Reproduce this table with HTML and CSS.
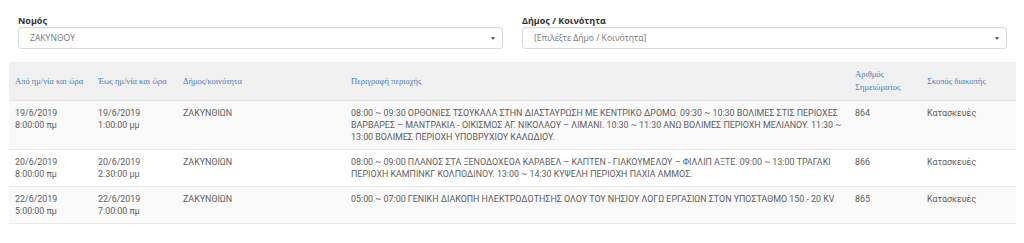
FILE: index.html
```html
<!DOCTYPE html>
<html lang="el">
<head>
<meta charset="utf-8">
<title>Διακοπές ρεύματος</title>
<link rel="stylesheet" href="styles.css">
</head>
<body>
<div class="page">
  <div class="filters">
    <div class="field">
      <label class="field-label">Νομός</label>
      <div class="select"><span class="select-value">ΖΑΚΥΝΘΟΥ</span><span class="select-arrow"></span></div>
    </div>
    <div class="field">
      <label class="field-label">Δήμος / Κοινότητα</label>
      <div class="select"><span class="select-value">[Επιλέξτε Δήμο / Κοινότητα]</span><span class="select-arrow"></span></div>
    </div>
  </div>
  <table class="outages">
    <colgroup>
      <col class="c-from"><col class="c-to"><col class="c-muni"><col class="c-desc"><col class="c-num"><col class="c-purpose">
    </colgroup>
    <thead>
      <tr>
        <th>Από ημ/νία και ώρα</th>
        <th>Έως ημ/νία και ώρα</th>
        <th>Δήμος/κοινότητα</th>
        <th>Περιγραφή περιοχής</th>
        <th>Αριθμός Σημειώματος</th>
        <th>Σκοπός διακοπής</th>
      </tr>
    </thead>
    <tbody>
      <tr>
        <td>19/6/2019<br>8:00:00 πμ</td>
        <td>19/6/2019<br>1:00:00 μμ</td>
        <td>ΖΑΚΥΝΘΙΩΝ</td>
        <td>08:00 ~ 09:30 ΟΡΘΟΝΙΕΣ ΤΣΟΥΚΑΛΑ ΣΤΗΝ ΔΙΑΣΤΑΥΡΩΣΗ ΜΕ ΚΕΝΤΡΙΚΟ ΔΡΟΜΟ. 09:30 ~ 10:30 ΒΟΛΙΜΕΣ ΣΤΙΣ ΠΕΡΙΟΧΕΣ ΒΑΡΒΑΡΕΣ – ΜΑΝΤΡΑΚΙΑ - ΟΙΚΙΣΜΟΣ ΑΓ. ΝΙΚΟΛΑΟΥ – ΛΙΜΑΝΙ. 10:30 ~ 11:30 ΑΝΩ ΒΟΛΙΜΕΣ ΠΕΡΙΟΧΗ ΜΕΛΙΑΝΟΥ. 11:30 ~ 13:00 ΒΟΛΙΜΕΣ ΠΕΡΙΟΧΗ ΥΠΟΒΡΥΧΙΟΥ ΚΑΛΩΔΙΟΥ.</td>
        <td>864</td>
        <td>Κατασκευές</td>
      </tr>
      <tr>
        <td>20/6/2019<br>8:00:00 πμ</td>
        <td>20/6/2019<br>2:30:00 μμ</td>
        <td>ΖΑΚΥΝΘΙΩΝ</td>
        <td>08:00 ~ 09:00 ΠΛΑΝΟΣ ΣΤΑ ΞΕΝΟΔΟΧΕΟΑ ΚΑΡΑΒΕΛ – ΚΑΠΤΕΝ - ΓΙΑΚΟΥΜΕΛΟΥ – ΦΙΛΛΙΠ ΑΞΤΕ. 09:00 ~ 13:00 ΤΡΑΓΑΚΙ ΠΕΡΙΟΧΗ ΚΑΜΠΙΝΚΓ ΚΟΛΠΟΔΙΝΟΥ. 13:00 ~ 14:30 ΚΥΨΕΛΗ ΠΕΡΙΟΧΗ ΠΑΧΙΑ ΑΜΜΟΣ.</td>
        <td>866</td>
        <td>Κατασκευές</td>
      </tr>
      <tr>
        <td>22/6/2019<br>5:00:00 πμ</td>
        <td>22/6/2019<br>7:00:00 πμ</td>
        <td>ΖΑΚΥΝΘΙΩΝ</td>
        <td>05:00 ~ 07:00 ΓΕΝΙΚΗ ΔΙΑΚΟΠΗ ΗΛΕΚΤΡΟΔΟΤΗΣΗΣ ΟΛΟΥ ΤΟΥ ΝΗΣΙΟΥ ΛΟΓΩ ΕΡΓΑΣΙΩΝ ΣΤΟΝ ΥΠΟΣΤΑΘΜΟ 150 - 20 KV</td>
        <td>865</td>
        <td>Κατασκευές</td>
      </tr>
    </tbody>
  </table>
</div>
</body>
</html>
```
FILE: styles.css
```css
html, body {
  margin: 0;
  padding: 0;
  background: #fff;
}
.page {
  padding: 14px 8px 0 9px;
  font-family: "Roboto", "Noto Sans", sans-serif;
  color: #555;
}
.filters {
  display: grid;
  grid-template-columns: 1fr 1fr;
  column-gap: 19px;
  padding: 0 9px;
}
.field {
  display: flex;
  flex-direction: column;
}
.field-label {
  font-family: "Open Sans", "Noto Sans", sans-serif;
  font-weight: 700;
  font-size: 9px;
  line-height: 13px;
  color: #333;
}
.select {
  display: flex;
  align-items: center;
  justify-content: space-between;
  height: 22px;
  box-sizing: border-box;
  border: 1px solid #dadada;
  border-radius: 3px;
  box-shadow: inset 0 1px 1px rgba(0,0,0,0.05);
  padding: 0 7px 0 11px;
  font-family: "Open Sans", "Noto Sans", sans-serif;
  font-size: 8.6px;
  color: #777;
}
.select-arrow {
  width: 0;
  height: 0;
  border-left: 2px solid transparent;
  border-right: 2px solid transparent;
  border-top: 3.5px solid #555;
}
.outages {
  margin-top: 13px;
  width: 1007px;
  border-collapse: collapse;
  table-layout: fixed;
  font-size: 8.9px;
  line-height: 12px;
}
.c-from { width: 83px; }
.c-to { width: 85px; }
.c-muni { width: 168px; }
.c-desc { width: 504px; }
.c-num { width: 72px; }
.c-purpose { width: 95px; }
.outages th {
  background: #f0f0f0;
  font-family: "Liberation Serif", "DejaVu Serif", serif;
  font-weight: 400;
  font-size: 8.5px;
  line-height: 13px;
  color: #4a80b8;
  text-align: left;
  vertical-align: middle;
  padding: 6px 6px;
  border-bottom: 1px solid #e4e4e4;
}
.outages td {
  padding: 6px 6px;
  vertical-align: top;
  border-top: 1px solid #e8e8e8;
  color: #5e5e5e;
}
.outages tbody tr:nth-child(odd) td {
  background: #f9f9f9;
}
.outages tbody tr:last-child td {
  border-bottom: 1px solid #ececec;
}
```
